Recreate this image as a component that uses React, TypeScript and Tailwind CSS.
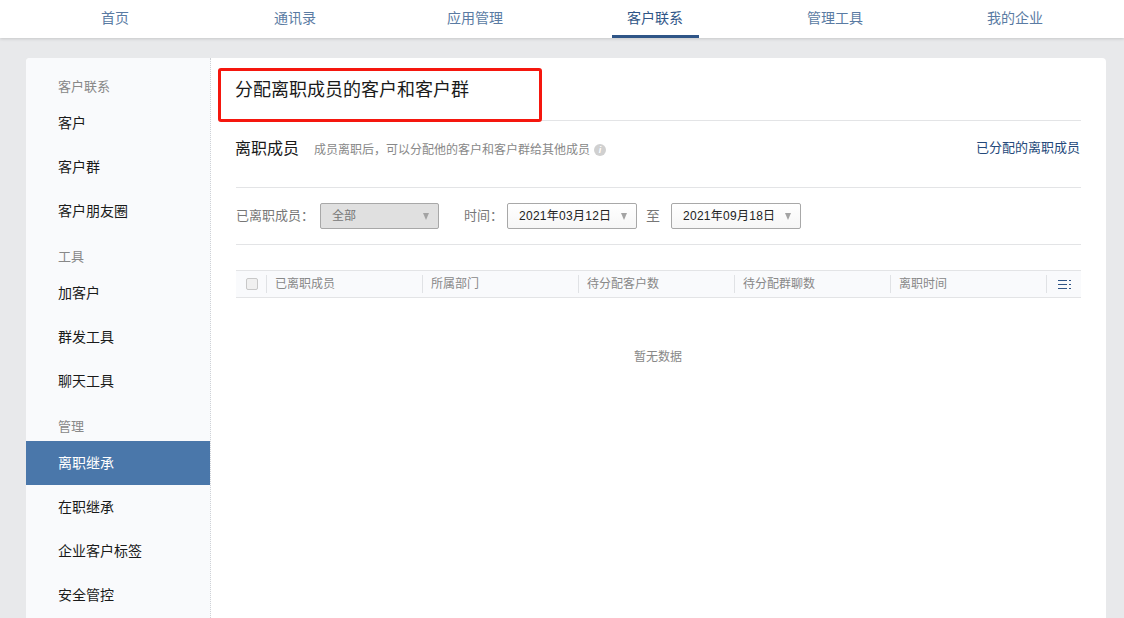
const FONT = "font-['Liberation_Sans','Noto_Sans_CJK_SC',sans-serif]";

function NavTab({ label, active }: { label: string; active?: boolean }) {
  return (
    <div className={`w-[180px] h-full flex items-center justify-center pb-[2px] text-[14px] relative ${active ? "text-[#2f5587]" : "text-[#5a7ba3]"}`}>
      {label}
      {active && <div className="absolute bottom-0 left-[47px] w-[87px] h-[3px] bg-[#2f5587]" />}
    </div>
  );
}

function SideHead({ label, first }: { label: string; first?: boolean }) {
  return (
    <div className={`${first ? "pt-5" : "pt-[15px]"} pb-[5px] pl-8 h-auto text-[13px] leading-[18px] text-[#888888]`}>{label}</div>
  );
}

function SideItem({ label, active }: { label: string; active?: boolean }) {
  return (
    <div className={`h-11 pl-8 flex items-center text-[14px] ${active ? "bg-[#4a77aa] text-white" : "text-[#1a1a1a]"}`}>{label}</div>
  );
}

function Caret() {
  return <div className="w-0 h-0 border-l-[3.5px] border-r-[3.5px] border-t-[7px] border-l-transparent border-r-transparent border-t-[#a3a3a3]" />;
}

function DateBox({ value }: { value: string }) {
  return (
    <div className="w-[130px] h-[26px] border border-[#a8a8a8] rounded-[2px] bg-gradient-to-b from-white to-[#f6f6f6] flex items-center justify-between pl-[11px] pr-[9px] text-[12px] tracking-[0.27px] text-[#222222]">
      <span>{value}</span>
      <Caret />
    </div>
  );
}

function HeadCell({ label, w }: { label: string; w: string }) {
  return (
    <div className={`${w} h-[18px] border-l border-[#e0e2e5] pl-2 flex items-center text-[12px] text-[#888888]`}>{label}</div>
  );
}

export default function App() {
  return (
    <div className={`relative w-[1124px] h-[618px] overflow-hidden bg-[#e8e9eb] ${FONT}`}>
      <div className="h-[38px] bg-white flex pl-[25px] shadow-[0_1px_3px_rgba(0,0,0,0.15)]">
        <NavTab label="首页" />
        <NavTab label="通讯录" />
        <NavTab label="应用管理" />
        <NavTab label="客户联系" active />
        <NavTab label="管理工具" />
        <NavTab label="我的企业" />
      </div>

      <div className="mt-5 ml-[26px] w-[1080px] h-[600px] bg-white rounded-t-[4px] flex overflow-hidden">
        <div className="w-[185px] shrink-0 bg-[#f9fafc] border-r border-dotted border-[#cfd2d6]">
          <SideHead label="客户联系" first />
          <SideItem label="客户" />
          <SideItem label="客户群" />
          <SideItem label="客户朋友圈" />
          <SideHead label="工具" />
          <SideItem label="加客户" />
          <SideItem label="群发工具" />
          <SideItem label="聊天工具" />
          <SideHead label="管理" />
          <SideItem label="离职继承" active />
          <SideItem label="在职继承" />
          <SideItem label="企业客户标签" />
          <SideItem label="安全管控" />
        </div>

        <div className="flex-1 min-w-0 pl-2 pr-[25px]">
          <div className="h-[63px] border-b border-[#e3e4e6] pl-4 pt-5 text-[18px] leading-6 text-[#1a1a1a]">
            分配离职成员的客户和客户群
          </div>
          <div className="pl-[17px]">
            <div className="h-[67px] border-b border-[#e3e4e6] flex items-start pt-[17px]">
              <span className="-ml-px text-[16px] leading-[22px] text-[#1a1a1a]">离职成员</span>
              <span className="ml-[15px] text-[12px] leading-[24px] text-[#888888]">成员离职后，可以分配他的客户和客户群给其他成员</span>
              <span className="ml-1 mt-[6px] w-3 h-3 rounded-full bg-[#d0d0d0] text-white text-[9px] leading-3 text-center italic font-bold">i</span>
              <span className="ml-auto mr-px text-[13px] leading-[20px] text-[#24487a]">已分配的离职成员</span>
            </div>
            <div className="h-[57px] border-b border-[#e3e4e6] flex items-center">
              <span className="w-[84px] text-[13px] text-[#777777]">已离职成员：</span>
              <div className="w-[119px] h-[26px] border border-[#a8a8a8] rounded-[2px] bg-[#e0e0e0] flex items-center justify-between pl-[11px] pr-[9px] text-[12px] text-[#777777]">
                <span>全部</span>
                <Caret />
              </div>
              <span className="ml-[25px] w-[43px] text-[13px] text-[#777777]">时间：</span>
              <DateBox value="2021年03月12日" />
              <span className="ml-[9px] w-[25px] text-[14px] text-[#777777]">至</span>
              <DateBox value="2021年09月18日" />
            </div>
            <div className="mt-[25px] h-[28px] bg-[#f9fafc] border-y border-[#e3e4e6] flex items-center">
              <div className="w-[30px] h-full flex items-center pl-[10px]">
                <div className="w-3 h-3 rounded-[2px] border border-[#c8c8c8] bg-[#f0f0f0]" />
              </div>
              <HeadCell label="已离职成员" w="w-[156px]" />
              <HeadCell label="所属部门" w="w-[156px]" />
              <HeadCell label="待分配客户数" w="w-[156px]" />
              <HeadCell label="待分配群聊数" w="w-[156px]" />
              <HeadCell label="离职时间" w="w-[156px]" />
              <div className="flex-1 h-[18px] border-l border-[#e0e2e5] pl-[11px] flex items-center">
                <svg width="13" height="9" viewBox="0 0 13 9" fill="#2f5587">
                  <rect x="0" y="0" width="9" height="1" />
                  <rect x="0" y="4" width="9" height="1" />
                  <rect x="0" y="8" width="9" height="1" />
                  <rect x="11" y="0" width="2" height="1" />
                  <rect x="11" y="4" width="2" height="1" />
                  <rect x="11" y="8" width="2" height="1" />
                </svg>
              </div>
            </div>
            <div className="mt-[51px] text-center text-[12px] leading-4 text-[#888888] pr-[1px]">暂无数据</div>
          </div>
        </div>
      </div>

      <div className="absolute left-[218px] top-[68px] w-[324px] h-[54px] border-[3px] border-[#f5170e] rounded-[3px]" />
    </div>
  );
}
